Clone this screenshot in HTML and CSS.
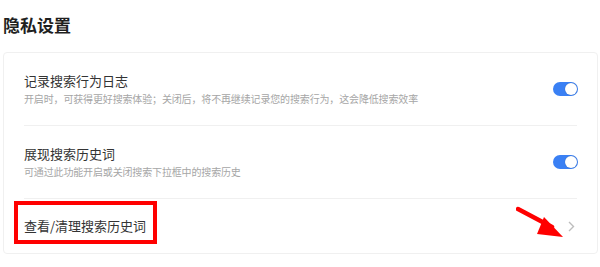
FILE: index.html
```html
<!DOCTYPE html>
<html lang="zh-CN">
<head>
<meta charset="utf-8">
<title>隐私设置</title>
<link rel="stylesheet" href="styles.css">
</head>
<body>
<div class="page">
  <h1 class="heading">隐私设置</h1>
  <div class="card">
    <div class="row">
      <div class="text">
        <div class="label">记录搜索行为日志</div>
        <div class="desc">开启时，可获得更好搜索体验；关闭后，将不再继续记录您的搜索行为，这会降低搜索效率</div>
      </div>
      <span class="toggle"><span class="knob"></span></span>
    </div>
    <div class="row">
      <div class="text">
        <div class="label">展现搜索历史词</div>
        <div class="desc">可通过此功能开启或关闭搜索下拉框中的搜索历史</div>
      </div>
      <span class="toggle"><span class="knob"></span></span>
    </div>
    <div class="row row-link">
      <div class="label">查看/清理搜索历史词</div>
      <svg class="chevron" width="7" height="11" viewBox="0 0 7 11"><path d="M1 1 L5.5 5.5 L1 10" fill="none" stroke="#bdbdbd" stroke-width="1.4"/></svg>
    </div>
  </div>
  <div class="highlight"></div>
  <svg class="arrow" width="60" height="40" viewBox="0 0 60 40">
    <line x1="2" y1="3" x2="36" y2="21" stroke="#ff0000" stroke-width="4.5" stroke-linecap="round"/>
    <polygon points="28,11 21,28 47,31" fill="#ff0000"/>
  </svg>
</div>
</body>
</html>
```
FILE: styles.css
```css
html, body {
  margin: 0;
  padding: 0;
  background: #ffffff;
}

.page {
  position: relative;
  padding: 13px 2px 0 3px;
  font-family: "Noto Sans CJK SC", "Noto Sans", sans-serif;
}

.heading {
  margin: 0 0 15px 0;
  font-size: 17px;
  line-height: 24px;
  font-weight: 700;
  color: #1f1f1f;
}

.card {
  border: 1px solid #f0f0f0;
  border-radius: 4px;
  padding: 0 20px;
}

.row {
  display: flex;
  align-items: center;
  justify-content: space-between;
  padding: 18px 0 19px 0;
  border-bottom: 1px solid #f0f0f0;
}

.row-link {
  border-bottom: none;
  padding: 17px 0 17px 0;
}

.text {
  display: flex;
  flex-direction: column;
  gap: 1px;
}

.label {
  font-size: 13px;
  line-height: 20px;
  color: #333333;
}

.desc {
  font-size: 10px;
  line-height: 14px;
  letter-spacing: -0.15px;
  color: #a6a6a6;
}

.toggle {
  display: flex;
  align-items: center;
  justify-content: flex-end;
  width: 25px;
  height: 14px;
  margin-right: -1px;
  padding: 0 1px;
  box-sizing: border-box;
  border-radius: 7px;
  background: #3a80f4;
}

.knob {
  width: 12px;
  height: 12px;
  border-radius: 50%;
  background: #ffffff;
  box-shadow: 0 0 1px rgba(0, 0, 0, 0.35);
}

.chevron {
  margin-right: 2px;
}

.highlight {
  position: absolute;
  left: 14px;
  top: 201px;
  width: 135px;
  height: 35px;
  border: 4px solid #ff0000;
}

.arrow {
  position: absolute;
  left: 516px;
  top: 206px;
}
```
